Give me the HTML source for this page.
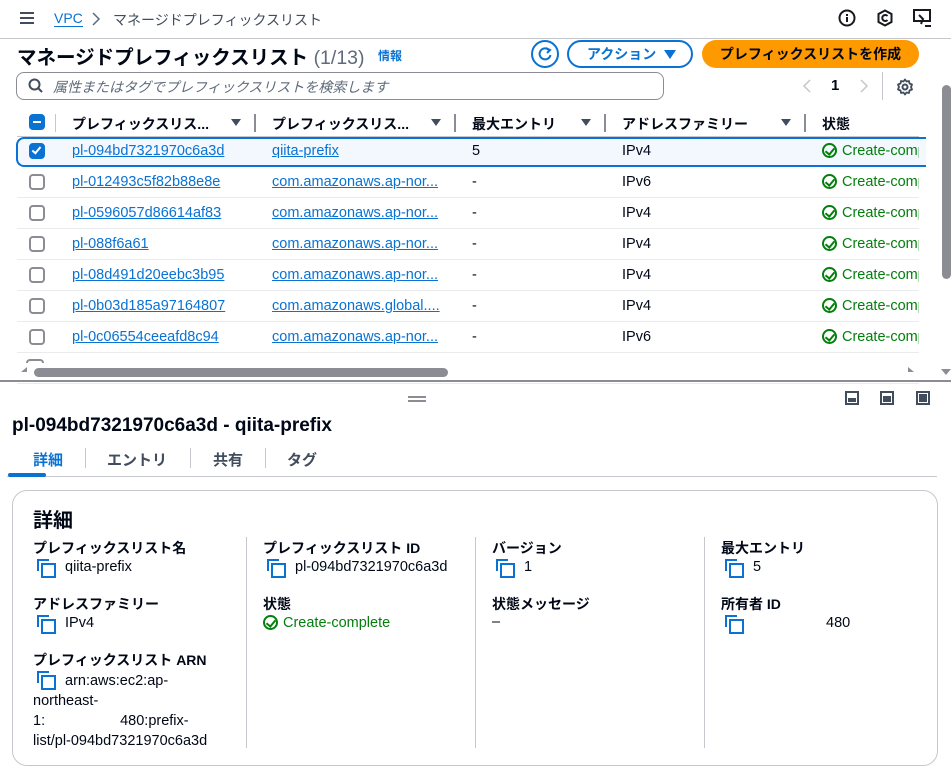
<!DOCTYPE html>
<html><head><meta charset="utf-8"><style>
*{box-sizing:border-box;margin:0;padding:0}
body{width:951px;height:776px;overflow:hidden;background:#fff;font-family:"Liberation Sans","Noto Sans CJK JP",sans-serif;color:#000716;font-size:14.5px;position:relative}
.a{position:absolute;white-space:nowrap}
.lnk{color:#0972d3;text-decoration:underline}
.b{font-weight:bold}
.cb{position:absolute;width:16px;height:16px;border:2px solid #8c8c94;border-radius:4px;background:#fff}
.cbon{background:#0972d3;border-color:#0972d3}
.ok{color:#037f0c}
.chk{display:inline-block;width:15px;height:15px;border:2px solid #037f0c;border-radius:50%;vertical-align:-3px;margin-right:5px;position:relative}
.chk:after{content:"";position:absolute;left:3px;top:1px;width:4px;height:7px;border:solid #037f0c;border-width:0 2px 2px 0;transform:rotate(40deg)}
.row{position:absolute;left:17px;width:902px;height:31px;border-bottom:1px solid #e9ebed}
.sep{position:absolute;width:2px;height:18px;background:#8c8c94}
.tri{position:absolute;width:0;height:0;border-left:5px solid transparent;border-right:5px solid transparent;border-top:7px solid #414d5c}
.cp{position:absolute;width:15px;height:15px}
.cp:before{content:"";position:absolute;left:0;top:0;width:10px;height:10px;border-left:2px solid #0972d3;border-top:2px solid #0972d3}
.cp:after{content:"";position:absolute;left:4px;top:4px;width:11px;height:11px;border:2px solid #0972d3}
.lbl{font-weight:bold;font-size:14px}
.vl{position:absolute;width:1px;background:#c6c6cd}
</style></head><body>
<div class="a" style="left:20px;top:12px;width:14px;height:2px;background:#414d5c;box-shadow:0 5px 0 #414d5c,0 10px 0 #414d5c"></div>
<div class="a" style="left:54px;top:10px;color:#0972d3;font-size:14px;border-bottom:1px solid #0972d3;line-height:16px">VPC</div>
<svg class="a" style="left:91px;top:12px" width="10" height="14"><path d="M2 1 L8 7 L2 13" fill="none" stroke="#5f6b7a" stroke-width="1.5"/></svg>
<div class="a" style="left:113px;top:10px;color:#414d5c;font-size:14px">マネージドプレフィックスリスト</div>
<svg class="a" style="left:838px;top:9px" width="18" height="18"><circle cx="9" cy="9" r="7.5" fill="none" stroke="#16191f" stroke-width="2"/><rect x="8" y="8" width="2" height="5" fill="#16191f"/><rect x="8" y="5" width="2" height="2" fill="#16191f"/></svg>
<svg class="a" style="left:876px;top:9px" width="18" height="18"><path d="M9 1.5 L15.5 5 V13 L9 16.5 L2.5 13 V5 Z" fill="none" stroke="#16191f" stroke-width="2"/><path d="M11.5 7 A3 3 0 1 0 11.5 11" fill="none" stroke="#16191f" stroke-width="2"/></svg>
<svg class="a" style="left:913px;top:9px" width="20" height="20"><rect x="1" y="1" width="16" height="11" fill="none" stroke="#16191f" stroke-width="2"/><path d="M6 6 L10 10 L8 15" fill="none" stroke="#16191f" stroke-width="2"/><rect x="12" y="16" width="6" height="2" fill="#16191f"/></svg>
<div class="a" style="left:0;top:38px;width:951px;height:1px;background:#c6c6cd"></div>
<div class="a b" style="left:17px;top:41px;font-size:19.5px">マネージドプレフィックスリスト <span style="font-weight:normal;color:#5f6b7a">(1/13)</span></div>
<div class="a b" style="left:378px;top:47px;font-size:12px;color:#0972d3">情報</div>
<div class="a" style="left:531px;top:40px;width:28px;height:28px;border:2px solid #0972d3;border-radius:50%"></div>
<svg class="a" style="left:537px;top:46px" width="16" height="16"><path d="M12 4 A5.5 5.5 0 1 0 13.5 9" fill="none" stroke="#0972d3" stroke-width="2"/><path d="M9 2 L13 4 L10 7" fill="none" stroke="#0972d3" stroke-width="2"/></svg>
<div class="a b" style="left:567px;top:40px;width:126px;height:28px;border:2px solid #0972d3;border-radius:14px;color:#0972d3;font-size:14px;line-height:24px;padding-left:18px">アクション</div>
<div class="tri" style="left:664px;top:50px;border-top-color:#0972d3;border-width:9px 6px 0 6px"></div>
<div class="a b" style="left:702px;top:40px;width:217px;height:28px;background:#ff9900;border-radius:14px;font-size:14px;line-height:28px;text-align:center">プレフィックスリストを作成</div>
<div class="a" style="left:16px;top:72px;width:648px;height:28px;border:1px solid #8c8c94;border-radius:8px"></div>
<svg class="a" style="left:28px;top:78px" width="16" height="16"><circle cx="6.5" cy="6.5" r="5" fill="none" stroke="#414d5c" stroke-width="2"/><path d="M10 10 L14 14" stroke="#414d5c" stroke-width="2"/></svg>
<div class="a" style="left:53px;top:77px;color:#5f6b7a;font-style:italic;font-size:14px">属性またはタグでプレフィックスリストを検索します</div>
<svg class="a" style="left:802px;top:79px" width="10" height="14"><path d="M8 1 L2 7 L8 13" fill="none" stroke="#c6c6cd" stroke-width="1.5"/></svg>
<div class="a b" style="left:831px;top:77px;font-size:15px">1</div>
<svg class="a" style="left:859px;top:79px" width="10" height="14"><path d="M2 1 L8 7 L2 13" fill="none" stroke="#c6c6cd" stroke-width="1.5"/></svg>
<div class="vl" style="left:882px;top:72px;height:28px"></div>
<svg class="a" style="left:896px;top:78px" width="18" height="18"><circle cx="9" cy="9" r="2.5" fill="none" stroke="#414d5c" stroke-width="2"/><path d="M9 1.5 L10.5 3.5 L13 3 L13.5 5.5 L16 6.5 L15 9 L16 11.5 L13.5 12.5 L13 15 L10.5 14.5 L9 16.5 L7.5 14.5 L5 15 L4.5 12.5 L2 11.5 L3 9 L2 6.5 L4.5 5.5 L5 3 L7.5 3.5 Z" fill="none" stroke="#414d5c" stroke-width="1.8" stroke-linejoin="round"/></svg>
<div class="cb cbon" style="left:29px;top:114px"><div style="position:absolute;left:2px;top:5px;width:8px;height:2px;background:#fff"></div></div>
<div class="sep" style="left:55px;top:114px;width:1px;background:#c6c6cd"></div>
<div class="a b" style="left:72px;top:114px;font-size:14px">プレフィックスリス...</div>
<div class="tri" style="left:231px;top:119px"></div>
<div class="sep" style="left:254px;top:114px"></div>
<div class="a b" style="left:272px;top:114px;font-size:14px">プレフィックスリス...</div>
<div class="tri" style="left:431px;top:119px"></div>
<div class="sep" style="left:454px;top:114px"></div>
<div class="a b" style="left:472px;top:114px;font-size:14px">最大エントリ</div>
<div class="tri" style="left:581px;top:119px"></div>
<div class="sep" style="left:604px;top:114px"></div>
<div class="a b" style="left:622px;top:114px;font-size:14px">アドレスファミリー</div>
<div class="tri" style="left:781px;top:119px"></div>
<div class="sep" style="left:804px;top:114px"></div>
<div class="a b" style="left:822px;top:114px;font-size:14px">状態</div>
<div class="a" style="left:17px;top:136px;width:902px;height:1px;background:#c6c6cd"></div>
<div class="a" style="left:16px;top:137px;width:910px;height:30px;background:#f2f8fd;border:2px solid #0972d3;border-radius:8px;border-right:none;border-top-right-radius:0;border-bottom-right-radius:0"></div>
<div class="cb cbon" style="left:29px;top:143px"><div style="position:absolute;left:3px;top:0px;width:5px;height:9px;border:solid #fff;border-width:0 2px 2px 0;transform:rotate(40deg)"></div></div>
<div class="a lnk" style="left:72px;top:143px">pl-094bd7321970c6a3d</div>
<div class="a lnk" style="left:272px;top:143px">qiita-prefix</div>
<div class="a" style="left:472px;top:143px">5</div>
<div class="a" style="left:622px;top:143px">IPv4</div>
<div class="a ok" style="left:822px;top:143px;width:97px;overflow:hidden"><span class="chk"></span>Create-complete</div>

<div class="row" style="top:167px"></div>
<div class="cb" style="left:29px;top:174px"></div><div class="a lnk" style="left:72px;top:174px">pl-012493c5f82b88e8e</div><div class="a lnk" style="left:272px;top:174px">com.amazonaws.ap-nor...</div><div class="a" style="left:472px;top:174px">-</div><div class="a" style="left:622px;top:174px">IPv6</div><div class="a ok" style="left:822px;top:174px;width:97px;overflow:hidden"><span class="chk"></span>Create-complete</div>
<div class="row" style="top:198px"></div>
<div class="cb" style="left:29px;top:205px"></div><div class="a lnk" style="left:72px;top:205px">pl-0596057d86614af83</div><div class="a lnk" style="left:272px;top:205px">com.amazonaws.ap-nor...</div><div class="a" style="left:472px;top:205px">-</div><div class="a" style="left:622px;top:205px">IPv4</div><div class="a ok" style="left:822px;top:205px;width:97px;overflow:hidden"><span class="chk"></span>Create-complete</div>
<div class="row" style="top:229px"></div>
<div class="cb" style="left:29px;top:236px"></div><div class="a lnk" style="left:72px;top:236px">pl-088f6a61</div><div class="a lnk" style="left:272px;top:236px">com.amazonaws.ap-nor...</div><div class="a" style="left:472px;top:236px">-</div><div class="a" style="left:622px;top:236px">IPv4</div><div class="a ok" style="left:822px;top:236px;width:97px;overflow:hidden"><span class="chk"></span>Create-complete</div>
<div class="row" style="top:260px"></div>
<div class="cb" style="left:29px;top:267px"></div><div class="a lnk" style="left:72px;top:267px">pl-08d491d20eebc3b95</div><div class="a lnk" style="left:272px;top:267px">com.amazonaws.ap-nor...</div><div class="a" style="left:472px;top:267px">-</div><div class="a" style="left:622px;top:267px">IPv4</div><div class="a ok" style="left:822px;top:267px;width:97px;overflow:hidden"><span class="chk"></span>Create-complete</div>
<div class="row" style="top:291px"></div>
<div class="cb" style="left:29px;top:298px"></div><div class="a lnk" style="left:72px;top:298px">pl-0b03d185a97164807</div><div class="a lnk" style="left:272px;top:298px">com.amazonaws.global....</div><div class="a" style="left:472px;top:298px">-</div><div class="a" style="left:622px;top:298px">IPv4</div><div class="a ok" style="left:822px;top:298px;width:97px;overflow:hidden"><span class="chk"></span>Create-complete</div>
<div class="row" style="top:322px"></div>
<div class="cb" style="left:29px;top:329px"></div><div class="a lnk" style="left:72px;top:329px">pl-0c06554ceeafd8c94</div><div class="a lnk" style="left:272px;top:329px">com.amazonaws.ap-nor...</div><div class="a" style="left:472px;top:329px">-</div><div class="a" style="left:622px;top:329px">IPv6</div><div class="a ok" style="left:822px;top:329px;width:97px;overflow:hidden"><span class="chk"></span>Create-complete</div>
<div class="row" style="top:353px"></div>
<div class="a" style="left:0;top:361px;width:951px;height:20px;background:#fff"></div>
<div class="a" style="left:26px;top:359px;width:18px;height:4px;border:2px solid #8c8c94;border-bottom:none;border-radius:4px 4px 0 0"></div>
<div class="tri" style="left:21px;top:367px;border-width:5px 6px 5px 0;border-color:transparent #8c8c94 transparent transparent"></div>
<div class="a" style="left:34px;top:368px;width:414px;height:9px;background:#8c8c94;border-radius:5px"></div>
<div class="tri" style="left:908px;top:367px;border-width:5px 0 5px 6px;border-color:transparent transparent transparent #8c8c94"></div>
<div class="tri" style="left:941px;top:45px;border-width:0 5px 6px 5px;border-color:transparent transparent #8c8c94 transparent"></div>
<div class="a" style="left:942px;top:85px;width:9px;height:194px;background:#8c8c94;border-radius:5px"></div>
<div class="tri" style="left:941px;top:369px;border-width:6px 5px 0 5px;border-color:#8c8c94 transparent transparent transparent"></div>
<div class="a" style="left:0;top:380px;width:951px;height:2px;background:#8c8c94"></div>
<div class="a" style="left:408px;top:396px;width:18px;height:2px;background:#8c8c94;box-shadow:0 4px 0 #8c8c94"></div>
<div class="a" style="left:845px;top:391px;width:14px;height:14px;border:2px solid #414d5c"><div style="position:absolute;left:1px;right:1px;bottom:1px;height:4px;background:#414d5c"></div></div>
<div class="a" style="left:880px;top:391px;width:14px;height:14px;border:2px solid #414d5c"><div style="position:absolute;left:1px;right:1px;bottom:1px;top:3px;background:#414d5c"></div></div>
<div class="a" style="left:916px;top:391px;width:14px;height:14px;border:2px solid #414d5c"><div style="position:absolute;left:1px;right:1px;bottom:1px;top:1px;background:#414d5c"></div></div>
<div class="a b" style="left:12px;top:415px;font-size:19px">pl-094bd7321970c6a3d - qiita-prefix</div>
<div class="a b" style="left:33px;top:449px;font-size:15px;color:#0972d3">詳細</div>
<div class="a" style="left:85px;top:448px;width:1px;height:20px;background:#c6c6cd"></div>
<div class="a b" style="left:107px;top:449px;font-size:15px;color:#414d5c">エントリ</div>
<div class="a" style="left:190px;top:448px;width:1px;height:20px;background:#c6c6cd"></div>
<div class="a b" style="left:213px;top:449px;font-size:15px;color:#414d5c">共有</div>
<div class="a" style="left:265px;top:448px;width:1px;height:20px;background:#c6c6cd"></div>
<div class="a b" style="left:287px;top:449px;font-size:15px;color:#414d5c">タグ</div>
<div class="a" style="left:7px;top:476px;width:930px;height:1px;background:#c6c6cd"></div>
<div class="a" style="left:8px;top:473px;width:38px;height:4px;background:#0972d3;border-radius:2px"></div>
<div class="a" style="left:12px;top:490px;width:926px;height:276px;border:1px solid #c6c6cd;border-radius:15px"></div>
<div class="a b" style="left:33px;top:504px;font-size:20px">詳細</div>
<div class="vl" style="left:246px;top:537px;height:211px"></div>
<div class="vl" style="left:475px;top:537px;height:211px"></div>
<div class="vl" style="left:704px;top:537px;height:211px"></div>
<div class="a lbl" style="left:33px;top:538px">プレフィックスリスト名</div>
<div class="cp" style="left:37px;top:559px"></div><div class="a" style="left:65px;top:559px">qiita-prefix</div>
<div class="a lbl" style="left:33px;top:594px">アドレスファミリー</div>
<div class="cp" style="left:37px;top:615px"></div><div class="a" style="left:65px;top:615px">IPv4</div>
<div class="a lbl" style="left:33px;top:650px">プレフィックスリスト ARN</div>
<div class="cp" style="left:37px;top:671px"></div>
<div class="a" style="left:33px;top:671px;line-height:20px;white-space:normal;width:200px"><span style="padding-left:32px">arn:aws:ec2:ap-</span><br>northeast-<br>1:<span style="padding-left:75px">480:prefix-</span><br>list/pl-094bd7321970c6a3d</div>
<div class="a lbl" style="left:263px;top:538px">プレフィックスリスト ID</div>
<div class="cp" style="left:267px;top:559px"></div><div class="a" style="left:295px;top:559px">pl-094bd7321970c6a3d</div>
<div class="a lbl" style="left:263px;top:594px">状態</div>
<div class="a ok" style="left:263px;top:615px"><span class="chk"></span>Create-complete</div>
<div class="a lbl" style="left:492px;top:538px">バージョン</div>
<div class="cp" style="left:496px;top:559px"></div><div class="a" style="left:524px;top:559px">1</div>
<div class="a lbl" style="left:492px;top:594px">状態メッセージ</div>
<div class="a" style="left:492px;top:614px">–</div>
<div class="a lbl" style="left:721px;top:538px">最大エントリ</div>
<div class="cp" style="left:725px;top:559px"></div><div class="a" style="left:753px;top:559px">5</div>
<div class="a lbl" style="left:721px;top:594px">所有者 ID</div>
<div class="cp" style="left:725px;top:615px"></div><div class="a" style="left:826px;top:615px">480</div>
</body></html>
